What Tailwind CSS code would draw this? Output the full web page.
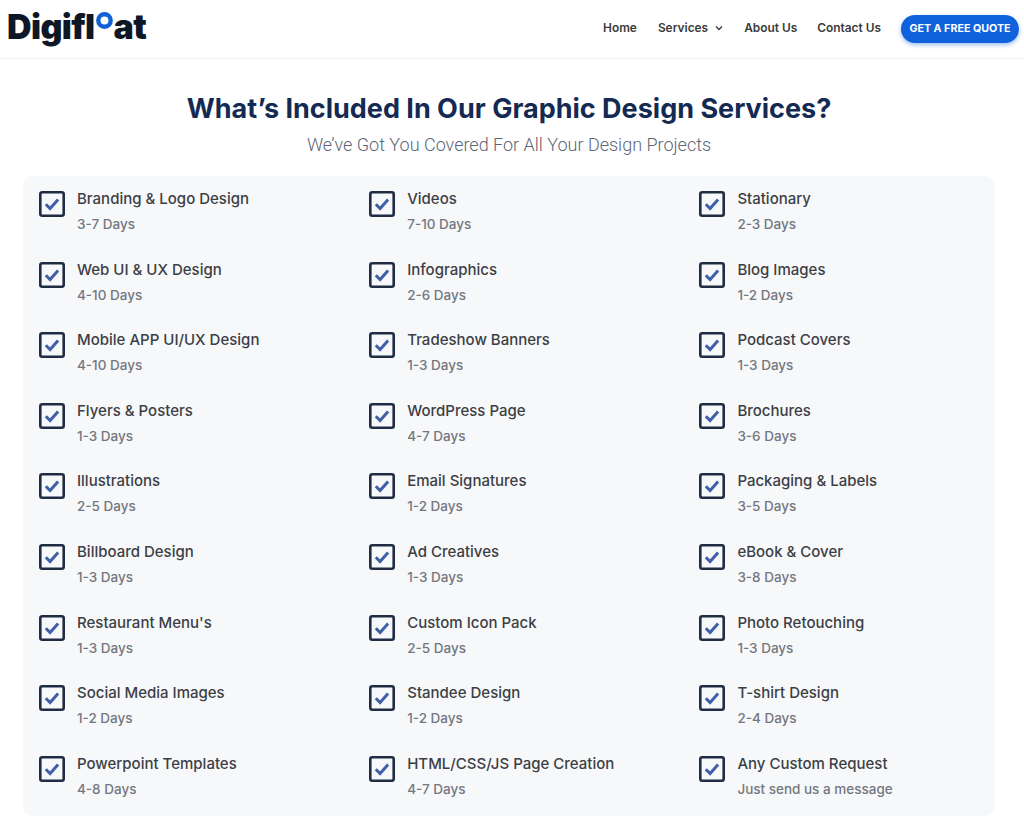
<!DOCTYPE html>
<html lang="en">
<head>
  <meta charset="UTF-8">
  <title>Digifloat - Graphic Design Services</title>
  <meta name="viewport" content="width=device-width, initial-scale=1.0">
  <script src="https://cdn.jsdelivr.net/npm/@tailwindcss/browser@4"></script>
</head>
<body class="bg-white h-[832px] overflow-hidden font-['Inter','Noto_Sans',sans-serif]">

  <header class="h-[59px] flex items-center justify-between border-b border-[#f1f1f1] pl-[7px] pr-[5px]">
    <div class="flex items-center h-[44px] mb-[5px] text-[#0e1726] text-[34px] font-black tracking-[-0.6px] leading-none">
      <span>Digifl</span>
      <svg class="w-[17px] h-[17px] mb-[12px] mx-[1px] shrink-0" viewBox="0 0 17 17"><circle cx="8.5" cy="8.5" r="6.2" fill="none" stroke="#1260d8" stroke-width="4.4"/></svg>
      <span>at</span>
    </div>
    <nav class="flex items-center text-[#3b3b3b] text-[11.9px] font-semibold">
      <a class="mr-[21px] mb-[2px]">Home</a>
      <a class="mr-[21px] mb-[2px] flex items-center gap-[7px]">Services
        <svg class="w-[8px] h-[6px]" viewBox="0 0 8 6"><path d="M1 1.5l3 3 3-3" fill="none" stroke="#3b3b3b" stroke-width="1.4"/></svg>
      </a>
      <a class="mr-[20px] mb-[2px]">About Us</a>
      <a class="mr-[20px] mb-[2px]">Contact Us</a>
      <a class="w-[118px] h-[28px] rounded-full bg-[#0f62dc] text-white text-[10.7px] font-bold flex items-center justify-center shadow-[0_2px_4px_rgba(15,98,220,0.4)]">GET A FREE QUOTE</a>
    </nav>
  </header>

  <h1 class="mt-[33px] pr-[6px] text-center text-[#142a52] text-[27px] leading-[34px] font-bold">What’s Included In Our Graphic Design Services?</h1>
  <p class="mt-[7px] pr-[6px] text-center text-[#5d6675] text-[18px] leading-[24px] font-['Roboto',sans-serif] font-light">We’ve Got You Covered For All Your Design Projects</p>

  <main id="panel" class="mx-[23px] mt-[19px] w-[972px] h-[640px] rounded-[10px] bg-[#f7f8fa] pl-[16px] pt-[14px] grid grid-cols-[330.2px_330.2px_1fr] auto-rows-[70.6px]"></main>

  <script>
    const services = [
      ["Branding & Logo Design", "3-7 Days"], ["Videos", "7-10 Days"], ["Stationary", "2-3 Days"],
      ["Web UI & UX Design", "4-10 Days"], ["Infographics", "2-6 Days"], ["Blog Images", "1-2 Days"],
      ["Mobile APP UI/UX Design", "4-10 Days"], ["Tradeshow Banners", "1-3 Days"], ["Podcast Covers", "1-3 Days"],
      ["Flyers & Posters", "1-3 Days"], ["WordPress Page", "4-7 Days"], ["Brochures", "3-6 Days"],
      ["Illustrations", "2-5 Days"], ["Email Signatures", "1-2 Days"], ["Packaging & Labels", "3-5 Days"],
      ["Billboard Design", "1-3 Days"], ["Ad Creatives", "1-3 Days"], ["eBook & Cover", "3-8 Days"],
      ["Restaurant Menu's", "1-3 Days"], ["Custom Icon Pack", "2-5 Days"], ["Photo Retouching", "1-3 Days"],
      ["Social Media Images", "1-2 Days"], ["Standee Design", "1-2 Days"], ["T-shirt Design", "2-4 Days"],
      ["Powerpoint Templates", "4-8 Days"], ["HTML/CSS/JS Page Creation", "4-7 Days"], ["Any Custom Request", "Just send us a message"]
    ];
    const panel = document.getElementById("panel");
    services.forEach(([name, days]) => {
      const item = document.createElement("div");
      item.className = "flex items-start";
      item.innerHTML = `
        <svg class="w-[26px] h-[26px] mt-[1px] shrink-0" viewBox="0 0 26 26">
          <rect x="1.3" y="1.3" width="23.4" height="23.4" rx="2" fill="none" stroke="#1f2c44" stroke-width="2.6"/>
          <path d="M6.8 13.2l4.3 4.4 8-9" fill="none" stroke="#3f60a8" stroke-width="3"/>
        </svg>
        <div class="ml-[12px]">
          <div class="text-[#3c3f45] text-[15px] leading-[18px] font-medium">${name.replace("&", "&amp;")}</div>
          <div class="mt-[8px] text-[#73777f] text-[13.5px] leading-[16px] font-medium">${days}</div>
        </div>`;
      panel.appendChild(item);
    });
  </script>
</body>
</html>
